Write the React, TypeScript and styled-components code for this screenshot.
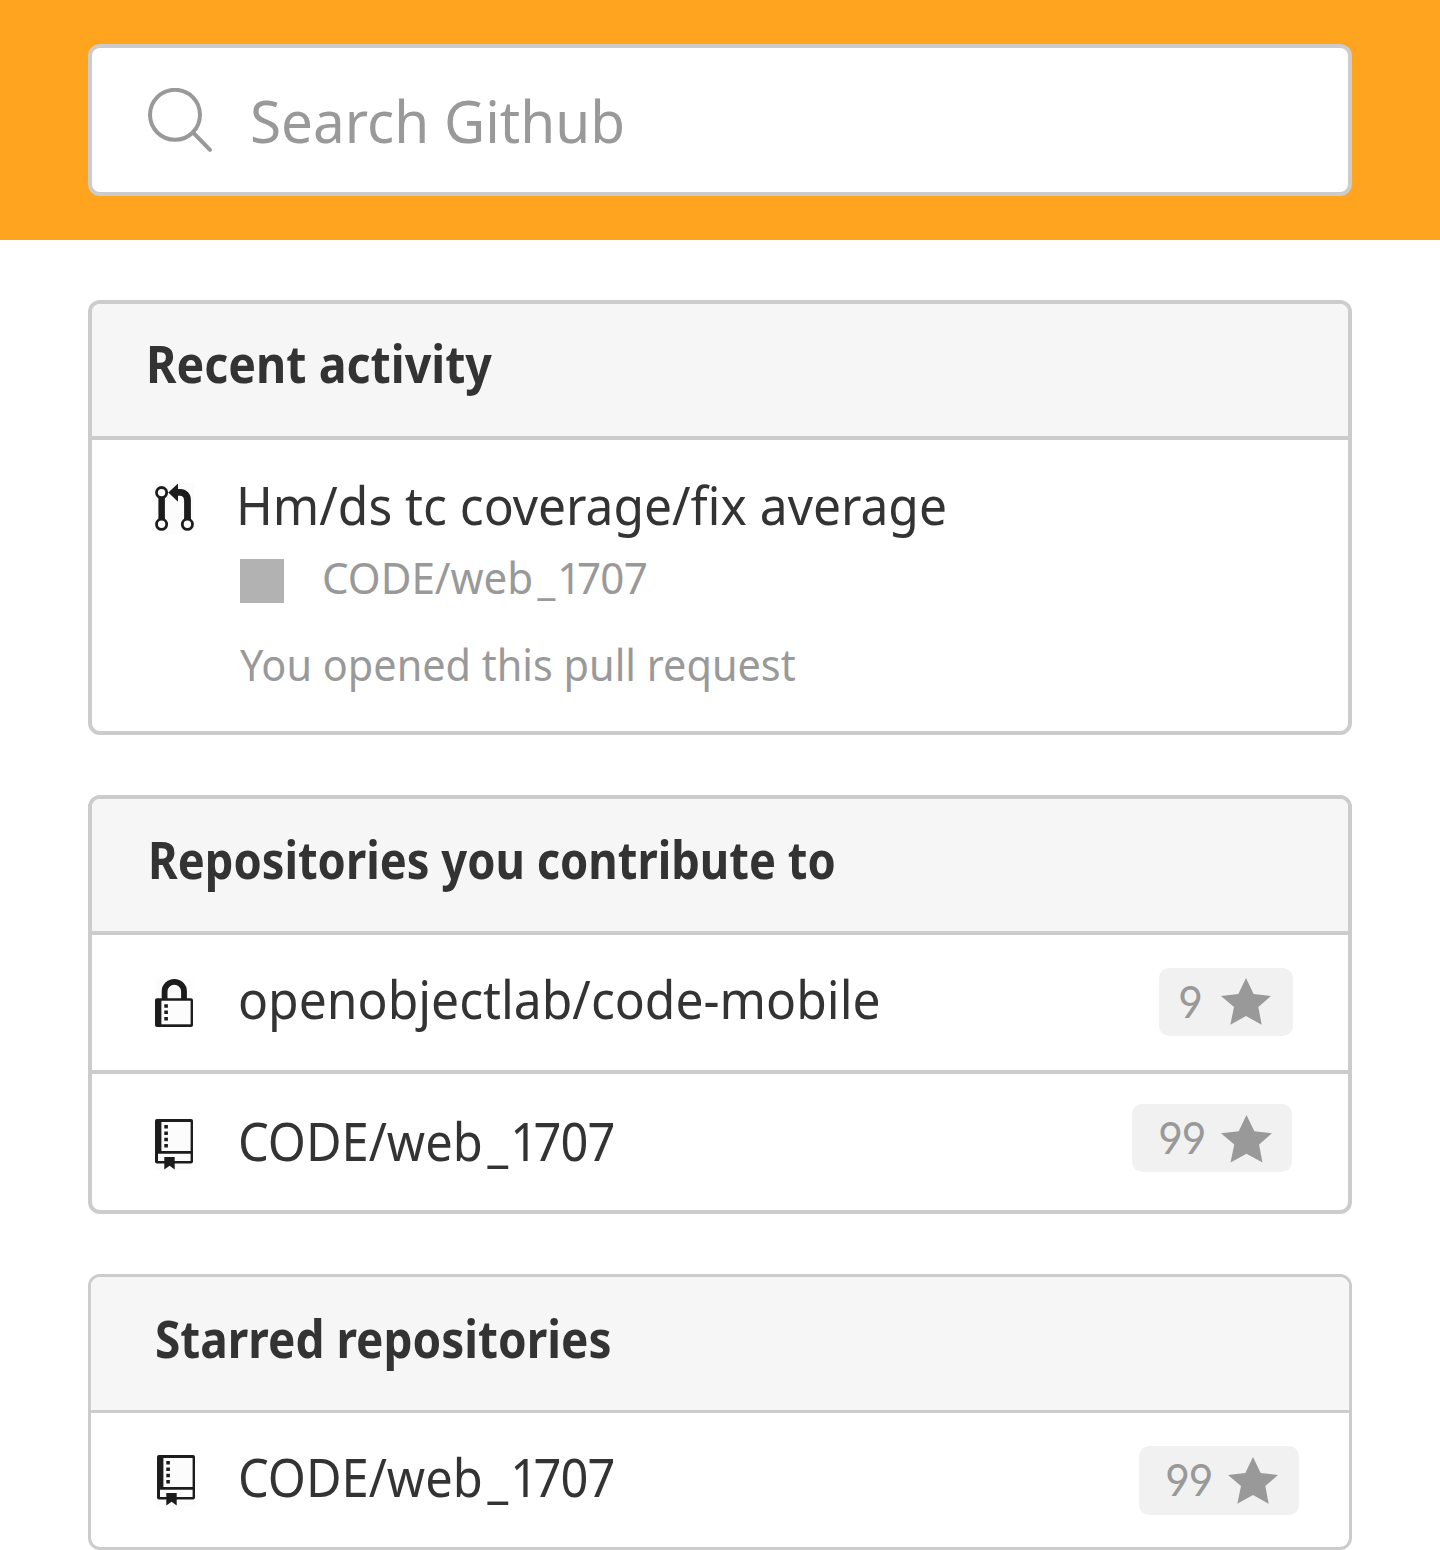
import React from 'react';
import styled, { createGlobalStyle } from 'styled-components';

const GlobalStyle = createGlobalStyle`
  *, *::before, *::after { box-sizing: border-box; }
  body {
    margin: 0;
    background: #fff;
    color: #333;
    font-family: "Noto Sans", "Open Sans", sans-serif;
  }
`;

const Page = styled.div`
  width: 1440px;
  height: 1550px;
  overflow: hidden;
  background: #fff;
`;

const TopBar = styled.header`
  height: 240px;
  padding: 44px 88px;
  background: #ffa41f;
`;

const SearchBox = styled.div`
  display: flex;
  align-items: flex-start;
  height: 152px;
  padding: 40px 56px;
  border: 4px solid #ccc;
  border-radius: 12px;
  background: #fff;
`;

/* Condenses the glyphs horizontally without touching their height. */
const Text = styled.span<{ $size: number; $squeeze: number; $muted?: boolean }>`
  display: block;
  font-size: ${(p) => p.$size}px;
  line-height: ${(p) => p.$size + 16}px;
  white-space: pre;
  color: ${(p) => (p.$muted ? '#999' : '#333')};
  transform: scaleX(${(p) => p.$squeeze});
  transform-origin: left center;
`;

const Underscore = styled.span`
  margin: 0 0.045em 0 0.1em;
  font-weight: 600;
`;

const Digits = styled.span<{ $tracking: number }>`
  letter-spacing: ${(p) => p.$tracking}em;
`;

const SearchLabel = styled.div`
  margin: -5px 0 0 36px;
`;

const Main = styled.main`
  display: flex;
  flex-direction: column;
  gap: 60px;
  padding: 60px 88px 0;
`;

const Card = styled.section<{ $line: number }>`
  border: ${(p) => p.$line}px solid #ccc;
  border-radius: 12px;
  overflow: hidden;

  & > * + * {
    border-top: ${(p) => p.$line}px solid #ccc;
  }
`;

const CardHeader = styled.div<{ $height: number; $indent: number; $top: number }>`
  height: ${(p) => p.$height}px;
  padding: ${(p) => p.$top}px 0 0 ${(p) => p.$indent}px;
  background: #f6f6f6;
`;

const Title = styled.h2<{ $squeeze: number }>`
  margin: 0;
  font-size: 52px;
  font-weight: 700;
  line-height: 68px;
  white-space: pre;
  color: #333;
  transform: scaleX(${(p) => p.$squeeze});
  transform-origin: left center;
`;

const Activity = styled.div`
  display: flex;
  height: 295px;
  padding: 31px 0 0 63px;
`;

const ActivityIcon = styled.div`
  width: 81px;
  flex: none;
  padding-top: 12px;
`;

const ActivityBody = styled.div`
  display: flex;
  flex-direction: column;
`;

const RepoLine = styled.div`
  display: flex;
  align-items: center;
  gap: 38px;
  height: 60px;
  margin: 8px 0 27px 4px;
`;

const Avatar = styled.div`
  width: 44px;
  height: 44px;
  margin-top: 8px;
  background: #b2b2b2;
`;

const Note = styled.div`
  padding-left: 4px;
`;

const Row = styled.div<{ $height: number; $left: number; $right: number }>`
  display: flex;
  align-items: flex-start;
  height: ${(p) => p.$height}px;
  padding: 0 ${(p) => p.$right}px 0 ${(p) => p.$left}px;
`;

const RowIcon = styled.div<{ $top: number; $gap: number }>`
  flex: none;
  margin: ${(p) => p.$top}px ${(p) => p.$gap}px 0 0;
`;

const RowName = styled.div<{ $top: number }>`
  flex: 1;
  padding-top: ${(p) => p.$top}px;
`;

const Badge = styled.div<{ $top: number; $width: number; $height: number; $pad: number; $end: number }>`
  display: flex;
  align-items: flex-start;
  justify-content: space-between;
  width: ${(p) => p.$width}px;
  height: ${(p) => p.$height}px;
  margin-top: ${(p) => p.$top}px;
  padding: 0 ${(p) => p.$end}px 0 ${(p) => p.$pad}px;
  border-radius: 10px;
  background: #f1f1f1;
`;

const Count = styled.span`
  font: 400 44px/68px Inter, "Noto Sans", sans-serif;
  font-feature-settings: "ss01", "cv04", "cv03";
  letter-spacing: -1.3px;
  color: #999;
  transform: scaleX(0.97);
  transform-origin: left center;
`;

const Svg = styled.svg`
  display: block;
  flex: none;
`;

const StarSvg = styled(Svg)<{ $top: number }>`
  margin-top: ${(p) => p.$top}px;
`;

const INK = '#1c1c1c';
const PAPER = '#fcfcfc';

const SearchIcon = () => (
  <Svg width="66" height="66" viewBox="0 0 66 66" fill="none" stroke="#999" strokeWidth="4">
    <circle cx="27" cy="26.8" r="25" />
    <path d="M45 44.5 62 61.8" strokeLinecap="round" />
  </Svg>
);

const PullRequestIcon = () => (
  <Svg width="39" height="51" viewBox="0 0 39 51">
    <path fill={PAPER} d="M0 0h39v51H0z" />
    <path fill={INK} d="M3.4 14h6.5v23H3.4zM23 .4v5.7h2.2c6 0 10.7 4.4 10.7 10.6V37h-6.8V17.4c0-3-1.6-4.7-4.2-4.7H23v6.1L13.3 9.6z" />
    <g fill="#fff" stroke={INK} strokeWidth="2.8">
      <circle cx="6.6" cy="9.6" r="5.1" />
      <circle cx="6.6" cy="41.3" r="5.1" />
      <circle cx="32.4" cy="41.3" r="5.1" />
    </g>
  </Svg>
);

const LockIcon = () => (
  <Svg width="38" height="48" viewBox="0 0 38 48">
    <path fill={PAPER} d="M0 0h38v48H0z" />
    <path fill="none" stroke={INK} strokeWidth="5.8" d="M9.6 21v-8.6a9.7 9.5 0 0 1 19.4 0V21" />
    <rect y="19.3" width="38" height="28.6" rx="2" fill={INK} />
    <path fill={PAPER} d="M6.4 21.7h29.2v23.6H6.4z" />
    <path fill={INK} d="M9.3 25.3h3.6v3.5H9.3zM9.3 31.6h3.6v3.5H9.3zM9.3 37.9h3.6v3.5H9.3z" />
  </Svg>
);

const BookIcon = () => (
  <Svg width="38" height="51" viewBox="0 0 38 51">
    <path fill={PAPER} d="M0 0h38v51H0z" />
    <rect width="38" height="44.4" rx="2" fill={INK} />
    <path fill={PAPER} d="M6.4 3h29.2v29H6.4zM3 34.7h32.6v7.4H3z" />
    <path fill={INK} d="M9.3 6h3.6v3.5H9.3zM9.3 12.4h3.6v3.5H9.3zM9.3 18.8h3.6v3.5H9.3zM9.3 25.1h3.6v3.5H9.3z" />
    <path fill={INK} d="M9.3 38h10.4v12.4l-5.1-3.6-5.3 3.6z" />
  </Svg>
);

const Star = ({ top, width = 50 }: { top: number; width?: number }) => (
  <StarSvg $top={top} width={width} height={(width * 140) / 150} viewBox="0 0 150 140">
    <path fill="#999" d="M75 0 98 48 150 54 112 87 122 140 75 114 28 140 39 87 0 54 52 48z" />
  </StarSvg>
);

const WebRepo = ({ size, muted }: { size: number; muted?: boolean }) => (
  <Text $size={size} $squeeze={muted ? 0.957 : 0.938} $muted={muted}>
    CODE/web<Underscore>_</Underscore>
    <Digits $tracking={-0.1}>1</Digits>
    <Digits $tracking={-0.0175}>707</Digits>
  </Text>
);

export default function App() {
  return (
    <Page>
      <GlobalStyle />
      <TopBar>
        <SearchBox>
          <SearchIcon />
          <SearchLabel>
            <Text $size={59} $squeeze={0.96} $muted>Search Github</Text>
          </SearchLabel>
        </SearchBox>
      </TopBar>

      <Main>
        <Card $line={4}>
          <CardHeader $height={132} $indent={54} $top={25}>
            <Title $squeeze={0.895}>Recent activity</Title>
          </CardHeader>
          <Activity>
            <ActivityIcon>
              <PullRequestIcon />
            </ActivityIcon>
            <ActivityBody>
              <Text $size={52} $squeeze={0.956}>Hm/ds tc coverage/fix average</Text>
              <RepoLine>
                <Avatar />
                <WebRepo size={44} muted />
              </RepoLine>
              <Note>
                <Text $size={44} $squeeze={0.941} $muted>You opened this pull request</Text>
              </Note>
            </ActivityBody>
          </Activity>
        </Card>

        <Card $line={4}>
          <CardHeader $height={132} $indent={56} $top={26}>
            <Title $squeeze={0.871}>Repositories you contribute to</Title>
          </CardHeader>
          <Row $height={139} $left={63} $right={55}>
            <RowIcon $top={44} $gap={45}><LockIcon /></RowIcon>
            <RowName $top={30}>
              <Text $size={52} $squeeze={0.957}>openobjectlab/code-mobile</Text>
            </RowName>
            <Badge $top={33} $width={134} $height={68} $pad={19} $end={22}>
              <Count>9</Count>
              <Star top={10} />
            </Badge>
          </Row>
          <Row $height={140} $left={63} $right={56}>
            <RowIcon $top={45} $gap={45}><BookIcon /></RowIcon>
            <RowName $top={33}>
              <WebRepo size={52} />
            </RowName>
            <Badge $top={30} $width={160} $height={68} $pad={26} $end={20}>
              <Count>99</Count>
              <Star top={11} width={51} />
            </Badge>
          </Row>
        </Card>

        <Card $line={3}>
          <CardHeader $height={133} $indent={64} $top={27}>
            <Title $squeeze={0.884}>Starred repositories</Title>
          </CardHeader>
          <Row $height={137} $left={66} $right={50}>
            <RowIcon $top={42} $gap={43}><BookIcon /></RowIcon>
            <RowName $top={30}>
              <WebRepo size={52} />
            </RowName>
            <Badge $top={33} $width={160} $height={69} $pad={26} $end={21.5}>
              <Count>99</Count>
              <Star top={11} />
            </Badge>
          </Row>
        </Card>
      </Main>
    </Page>
  );
}
